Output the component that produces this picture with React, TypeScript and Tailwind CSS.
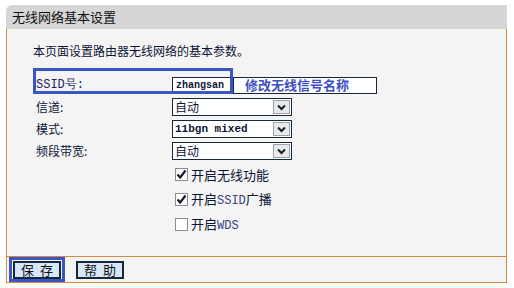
import React from "react";

const font = { fontFamily: '"Noto Sans CJK SC", "Noto Sans", sans-serif' };

function Select({ value, mono }: { value: string; mono?: boolean }) {
  return (
    <div className="flex h-[18px] w-[120px] items-stretch border border-[#17283a] bg-white">
      <span
        className={
          "flex flex-1 items-center pl-[2px] text-[#0d1436] " +
          (mono ? "font-['Liberation_Mono'] text-[11px] font-bold" : "text-[12px]")
        }
      >
        {value}
      </span>
      <span className="m-[1px] flex w-[17px] items-center justify-center border border-[#9aa3ad] bg-[#e9e9e9]">
        <svg width="9" height="7" viewBox="0 0 9 7">
          <path d="M1 1.5 L4.5 5 L8 1.5" fill="none" stroke="#10202e" strokeWidth="2" />
        </svg>
      </span>
    </div>
  );
}

function Check({ checked, children }: { checked: boolean; children: React.ReactNode }) {
  return (
    <div className="flex h-[25px] items-center gap-[3px] pl-[168px]">
      <span className="relative flex h-[13px] w-[13px] items-center justify-center border border-[#8a8f96] bg-white">
        {checked && (
          <svg width="11" height="11" viewBox="0 0 11 11" className="absolute">
            <path d="M1.5 5.5 L4.2 8.5 L9.5 1.5" fill="none" stroke="#151c2a" strokeWidth="2.2" />
          </svg>
        )}
      </span>
      <span className="text-[13px] leading-none text-[#0d1436]">{children}</span>
    </div>
  );
}

export default function App() {
  return (
    <div className="h-[288px] w-[514px] bg-white pl-[6px] pt-[5px]" style={font}>
      <div className="w-[501px]">
        <div className="flex h-[24px] items-center rounded-tl-[6px] bg-[#d6d6d6] pl-[6px] text-[13px] text-[#111]">
          无线网络基本设置
        </div>
        <div className="relative h-[228px] border-x border-b border-[#d48a3e] bg-[#f4f4f4] pt-[14px]">
          <div className="pl-[26px] text-[12px] leading-[16px] text-[#0d1436]">
            本页面设置路由器无线网络的基本参数。
          </div>
          <div className="mt-[17px] flex flex-col gap-[4px]">
            <div className="flex h-[18px] items-center">
              <span className="w-[165px] pl-[29px] font-['Liberation_Mono'] text-[12px] text-[#1c2460]">
                SSID号:
              </span>
              <span className="flex h-[17px] w-[60px] items-center border border-[#17283a] bg-white pl-[3px] font-['Liberation_Mono'] text-[10px] font-bold text-[#0d1436]">
                zhangsan
              </span>
              <span className="ml-[1px] flex h-[17px] w-[144px] items-center border border-[#17283a] bg-white pl-[11px] text-[13px] font-bold text-[#3d4fc4]">
                修改无线信号名称
              </span>
            </div>
            <div className="flex h-[18px] items-center">
              <span className="w-[165px] pl-[29px] text-[12px] text-[#0d1436]">信道:</span>
              <Select value="自动" />
            </div>
            <div className="flex h-[18px] items-center">
              <span className="w-[165px] pl-[29px] text-[12px] text-[#0d1436]">模式:</span>
              <Select value="11bgn mixed" mono />
            </div>
            <div className="flex h-[18px] items-center">
              <span className="w-[165px] pl-[29px] text-[12px] text-[#0d1436]">频段带宽:</span>
              <Select value="自动" />
            </div>
          </div>
          <div className="mt-[2px] flex flex-col">
            <Check checked>开启无线功能</Check>
            <Check checked>
              开启<span className="font-['Liberation_Mono'] text-[12px] text-[#3a4080]">SSID</span>广播
            </Check>
            <Check checked={false}>
              开启<span className="font-['Liberation_Mono'] text-[12px] text-[#3a4080]">WDS</span>
            </Check>
          </div>
          <div className="absolute left-[26px] top-[39px] h-[26px] w-[200px] border-[3px] border-[#3a56c4]" />
        </div>
        <div className="flex h-[26px] items-center gap-[11px] border-x border-b border-[#d48a3e] bg-[#f4f4f4] pl-[2px]">
          <div className="flex h-[25px] w-[56px] items-center justify-center border-[3px] border-[#3a56c4]">
            <button className="flex h-[18px] w-[48px] items-center justify-center border-2 border-[#17283a] bg-[#d7e7f8] pl-[6px] text-[13px] tracking-[6px] text-[#111]">
              保存
            </button>
          </div>
          <button className="flex h-[18px] w-[48px] items-center justify-center border-2 border-[#17283a] bg-[#d7e7f8] pl-[6px] text-[13px] tracking-[6px] text-[#111]">
            帮助
          </button>
        </div>
      </div>
    </div>
  );
}
